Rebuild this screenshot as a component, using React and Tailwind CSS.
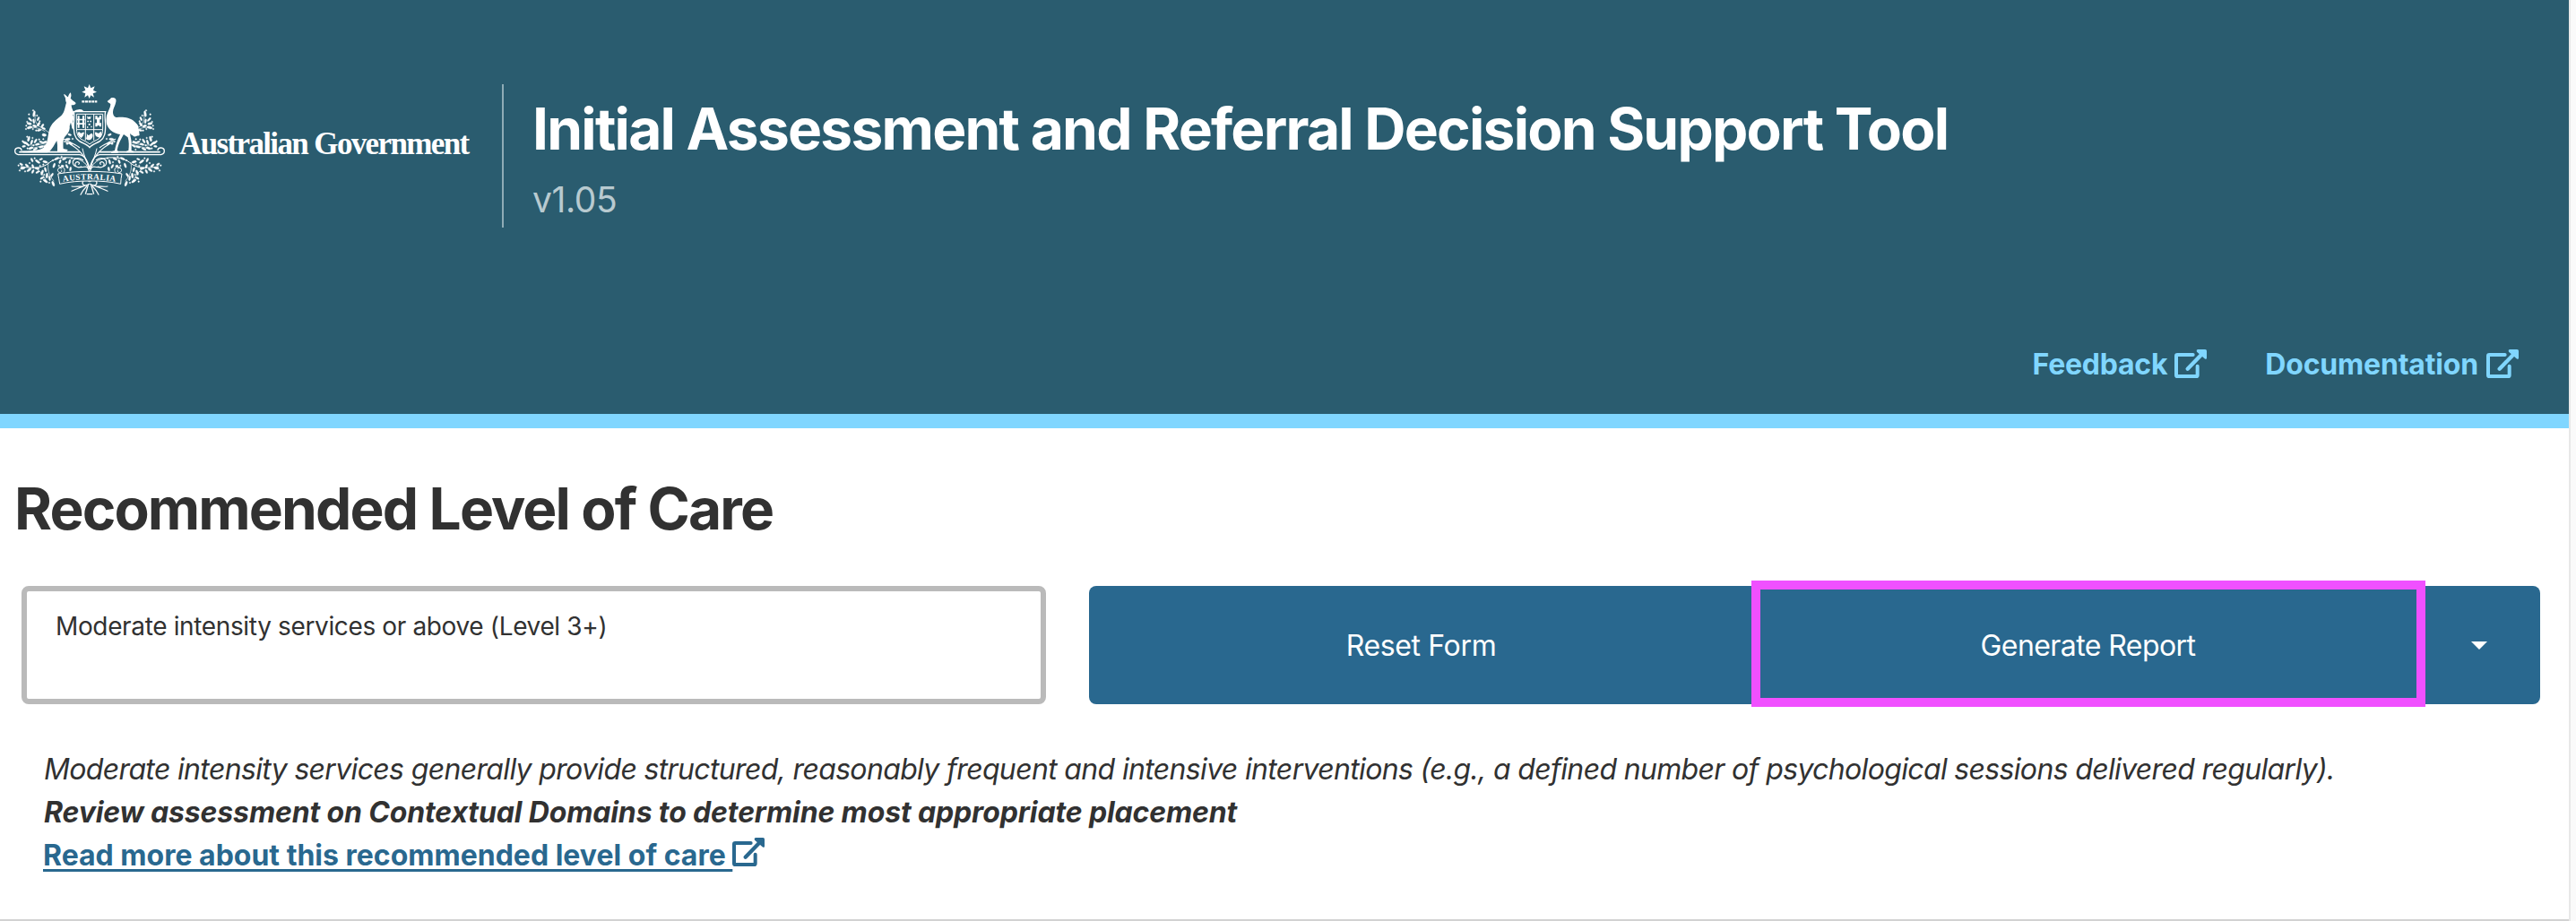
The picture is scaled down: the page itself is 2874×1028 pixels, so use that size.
const LEAVES = [
  // [x, y, rx, ry, rotation] on the left-hand branches
  [114, 141, 3.5, 10, 10], [101, 160, 3, 8, -45], [113, 166, 3, 8, -10], [128, 158, 3, 7, 25],
  [98, 174, 8, 3.5, 10], [99, 187, 9, 4, -15], [116, 182, 7, 3.5, 20], [129, 176, 3.5, 8, 30],
  [142, 181, 3, 7, 35], [146, 190, 6, 3, 20], [131, 196, 7, 3, -15],
  [96, 225, 3.5, 9, 15], [84, 238, 8, 3.5, 20], [80, 250, 6, 3, -10], [93, 244, 6, 3, 45],
  [106, 236, 3, 8, 20], [119, 232, 3, 8, 30], [125, 243, 7, 3, -15], [103, 256, 8, 3.5, -20],
  [118, 259, 8, 3, -25], [139, 236, 8, 3, 20], [150, 236, 7, 3, -20], [138, 252, 8, 3, -10], [152, 249, 7, 3, -30],
  [148, 212, 7, 4.5, 10], [233, 211, 6, 3, 20], [227, 226, 8, 3.5, -5], [236, 240, 7, 3, 40], [225, 241, 4, 3, 0],
  [107, 296, 7, 3, 65], [126, 301, 9, 3.5, 35], [151, 302, 8, 3.5, 15], [137, 293, 6, 2.5, -20],
  [71, 310, 6, 3, 30], [76, 323, 8, 4, -10], [90, 314, 7, 3, 40], [97, 329, 8, 3.5, -35],
  [110, 317, 3, 7, -20], [110, 334, 3, 7, 25], [124, 324, 8, 3, 10], [126, 336, 7, 3, -30],
  [141, 338, 3.5, 9, 20], [152, 328, 3, 8, -15], [141, 356, 7, 3, -30], [157, 348, 3.5, 9, 5],
  [152, 366, 9, 3.5, 35], [166, 357, 3, 8, -10], [178, 375, 3.5, 9, -20], [174, 346, 3, 7, 30],
  [190, 291, 8, 3, -25], [201, 301, 3, 7, 20], [215, 292, 7, 3, -20], [233, 302, 3, 8, 15],
  [224, 317, 3, 7, -30], [236, 326, 3, 7, 10], [209, 316, 5, 3, 10], [181, 314, 3, 8, 20],
];
const BERRIES = [
  [111, 130], [97, 143], [124, 147], [91, 168], [133, 166], [88, 181], [110, 192], [121, 197], [87, 192],
  [76, 233], [91, 218], [109, 222], [112, 247], [92, 257], [131, 227], [145, 226], [146, 261],
  [62, 314], [66, 331], [84, 334], [99, 306], [116, 290], [145, 311], [134, 315], [148, 345], [165, 372], [136, 368],
  [177, 297], [206, 285], [222, 303], [197, 315], [240, 290], [217, 234], [243, 225],
];

function Half() {
  return (
    <g>
      <g fill="none" stroke="#fff" strokeLinecap="round">
        <path d="M72 262c-2-10-22-10-22 4 0 9 9 12 20 12h196c18 2 28 22 34 48" strokeWidth="4" />
        <path d="M66 269h200" strokeWidth="5" />
        <path d="M118 145c-4 18 4 38 28 46 8 6 16 12 22 16M98 186c18 0 34 2 52 14" strokeWidth="2" />
        <path d="M82 240c20 12 50 4 76-2M96 258c22-2 40-10 64-14" strokeWidth="2" />
        <path d="M296 318c-8-38-42-66-76-84M214 226c20 10 36 16 52 28" strokeWidth="3.5" />
        <path d="M70 318c30 4 70 10 96-14 20-18 64-20 92-12 20 6 34 18 38 34" strokeWidth="3" />
        <path d="M162 304c-4 22 0 40 18 62M118 322c14 8 24 20 36 42" strokeWidth="2" />
        <path d="M272 318c-14 8-26-6-18-14 7-6 16 3 9 6M278 296c-18-12-36-4-34 10 2 16 26 16 42 12 8 0 12 10 12 18" strokeWidth="3.5" />
        <path d="M276 258c4 20 14 42 22 64" strokeWidth="3" />
        <path d="M207 325c-8-8-18 2-12 10 6 6 16 0 10-5M198 321c8-4 20-1 18 10-1 10-12 16-20 11" strokeWidth="3" />
        <path d="M298 368c-4-10-22-6-22 4 0 9 12 12 22 4M290 380c-16 4-30 12-50 20M290 384c-10 10-16 18-20 28M276 384c-14 0-28 2-36 0" strokeWidth="3.5" />
      </g>
      <g fill="#fff" stroke="#fff" strokeWidth="1.2">
        {LEAVES.map(([x, y, rx, ry, a], i) => (
          <ellipse key={i} cx={x} cy={y} rx={rx} ry={ry} transform={`rotate(${a} ${x} ${y})`} />
        ))}
        {BERRIES.map(([x, y], i) => (
          <circle key={i} cx={x} cy={y} r="2.4" />
        ))}
      </g>
    </g>
  );
}

function CoatOfArms() {
  return (
    <svg viewBox="0 0 600 450" className="h-[150px] w-[200px] shrink-0" role="img" aria-label="Coat of arms">
      <Half />
      <g transform="matrix(-1 0 0 1 600 0)">
        <Half />
      </g>
      {/* star and wreath */}
      <path fill="#fff" d="M299 42l5 13 13-6-5 13 12 6-13 5 4 13-11-7-5 11-5-11-11 7 3-13-12-5 12-6-5-13 13 6z" />
      <path d="M274 100h51" stroke="#fff" strokeWidth="7" strokeDasharray="9 2" />
      {/* kangaroo */}
      <path
        fill="#fff"
        d="M214 75c5 2 9 6 12 10l2-1c1-5 4-10 8-14 3 6 3 13 0 19 3 3 5 6 12 11 4 3 7 5 5 8-4 4-10 4-14 4 0 8 4 16 8 24l22-7c6 0 9 4 11 6-8 1-14 0-18 3-6 4-14 6-18 6 4 8 2 18 0 24 4 6 6 16 4 24-3 4-8-2-8-8l-3-14-4 12c2 14-6 26-14 34-8 8-8 22-7 42l14 3c2 4-2 6-6 6h-28l0-22-2-14c-8 14-14 26-24 36-4 4-10 4-16 4H84c-8 0-14-2-16-5 30-2 62 0 78-12 14-12 14-40 18-56 6-26 26-38 42-52 10-10 12-30 16-42-4-8-2-16-4-18-2-4-5-8-4-12z"
      />
      {/* emu */}
      <path
        fill="#fff"
        d="M359 99c2-2 6-5 9-7 2-4 6-6 11-5 8 1 11 7 9 14-2 12-10 22-10 34 0 10 4 18 14 18 20-2 42 0 58 14 12 10 16 26 17 46-8 4-14 0-18 0-6 2-10-2-14-6 2 14 6 24 5 34v23l10 3c0 3-2 4-4 4h-24c0-4 2-6 8-7 2-14 2-30-2-44l-14-10c-8 14-18 30-22 54l6 4c0 4-4 4-6 4h-20c0-4 4-6 12-8 4-18 8-34 18-54-10-2-22-4-32-14-12-12-16-26-14-40 0-18 14-32 14-48-4-3-8-4-11-9z"
      />
      {/* shield */}
      <path d="M247 134h106c-4 12 0 30 0 46 0 24-2 42-18 52-12 8-28 12-35 22-7-10-23-14-35-22-16-10-18-28-18-52 0-16 4-34 0-46z" fill="#2a5c6f" stroke="#fff" strokeWidth="4" />
      <path d="M256 142h88v44c0 20-4 32-14 39-12 7-22 10-30 18-8-8-18-11-30-18-10-7-14-19-14-39z" fill="none" stroke="#fff" strokeWidth="3" />
      <path d="M286 142v88M314 142v88M256 194h88" stroke="#fff" strokeWidth="3" fill="none" />
      <g fill="#fff">
        <path d="M260 148h6v40h-6zM276 148h6v40h-6zM258 158h26v5h-26zM258 172h26v5h-26z" />
        <path d="M291 148l4 4 3-2 3 2 4-4-2 10h-10zM292 164h5v5h-5zM301 164h5v5h-5zM296 174h6v5h-6zM291 184h4v4h-4zM304 182h4v5h-4z" />
        <path d="M319 148h7v6h6v-6h7v12h-5v12h5v12h-7v-4h-6v4h-7v-12h5v-12h-5z" />
        <path d="M260 204c8-6 8 4 12 2s8-6 10-2c-2 8-4 14-10 18-6-2-12-8-12-18z" />
        <path d="M290 206c4 6 6 8 8 6l8-6c6 2 6 10 2 16-4 8-14 10-20 2 2-6 4-10 2-18z" />
        <path d="M318 204c4-4 8 4 12 2l8-6c4 8 2 18-4 22l-8-4c-6 0-8-6-8-14z" />
      </g>
      <path d="M250 134c6-5 20-7 27-1" stroke="#fff" strokeWidth="6" fill="none" />
      {/* scroll */}
      <path d="M194 342c34-6 70-8 106-8s74 2 108 8c-2 10-4 22-4 34-32-8-68-10-102-10s-70 2-102 10c-2-12-4-24-6-34z" fill="#2a5c6f" stroke="#fff" strokeWidth="3" />
      <path id="scroll-line" d="M209 369c30-5 60-8 91-8s61 3 91 8" fill="none" />
      <text fill="#fff" fontFamily="Liberation Serif, serif" fontWeight="700" fontSize="28">
        <textPath href="#scroll-line" textLength="176" startOffset="2">AUSTRALIA</textPath>
      </text>
      <path d="M296 376l-10 34M304 376l10 34M290 410h20" stroke="#fff" strokeWidth="4" fill="none" />
    </svg>
  );
}

function ExternalIcon({ className = '' }) {
  return (
    <svg viewBox="0 0 108 96" className={'h-8 w-9 shrink-0 ' + className} fill="none" stroke="currentColor" aria-hidden="true">
      <path d="M62 18H10q-4 0-4 4v64q0 4 4 4h63q4 0 4-4V56" strokeWidth="12" strokeLinecap="round" />
      <path d="M44 65l48-49" strokeWidth="13" strokeLinecap="round" />
      <path d="M79 0h24q5 0 5 5v24q-2 6-7 2L75 8q-3-7 4-8z" fill="currentColor" stroke="none" />
    </svg>
  );
}

function HeaderLink({ children, className }) {
  return (
    <a href="#" className={'flex items-center text-[32px] leading-[48px] font-bold text-[#80d6ff] ' + className}>
      <span className="pt-0.5">{children}</span>
      <ExternalIcon />
    </a>
  );
}

export default function App() {
  return (
    <div className="flex h-[1028px] w-[2874px] overflow-hidden bg-[#fafafa] font-['Inter',sans-serif] text-[#313131]">
      <div className="flex w-[2866px] shrink-0 flex-col border-b-2 border-[#d2d2d2] bg-white">
        <header className="flex h-[478px] flex-col justify-between border-b-[16px] border-[#80d6ff] bg-[#2a5c6f]">
          <div className="flex pt-20">
            <CoatOfArms />
            <div className="w-[360px] pt-[61px] font-['Liberation_Serif',serif] text-[35px] leading-[40px] font-bold tracking-[-1.63px] whitespace-nowrap text-white">
              Australian Government
            </div>
            <div className="mt-[14px] h-40 border-l-2 border-[#8facb6] pt-[12px] pl-[32px]">
              <h1 className="text-[64px] leading-[76px] font-bold tracking-[-1.76px] whitespace-nowrap text-white">
                Initial Assessment and Referral Decision Support Tool
              </h1>
              <p className="mt-[13px] text-[39px] leading-[56px] tracking-[-0.4px] text-[#b8cad0]">v1.05</p>
            </div>
          </div>
          <nav className="flex justify-end gap-[65px] pr-14 pb-[31px]">
            <HeaderLink className="gap-2 tracking-[-0.24px]">Feedback</HeaderLink>
            <HeaderLink className="gap-[9px] tracking-[-0.178px]">Documentation</HeaderLink>
          </nav>
        </header>

        <main>
          <h2 className="pt-[52px] pl-4 text-[64px] leading-[76px] font-bold tracking-[-1.871px]">Recommended Level of Care</h2>
          <div className="mt-[48px] flex gap-12 pl-6">
            <div className="h-[132px] w-[1143px] rounded-lg border-[6px] border-[#bababa] pt-[18px] pl-[32px] text-[28px] leading-[42px] tracking-[-0.36px]">
              Moderate intensity services or above (Level 3+)
            </div>
            <div className="flex h-[132px] w-[1619px] rounded-lg bg-[#29688f] text-[32px] text-white">
              <button className="w-[743px] pt-0.5 pr-0.5 tracking-[-0.351px]">Reset Form</button>
              <button className="relative w-[744px] pt-0.5 pr-px tracking-[-0.574px]">
                Generate Report
                <span className="absolute -top-[6px] -left-[4px] h-[141px] w-[752px] border-[10px] border-[#f050ff]" />
              </button>
              <button className="flex w-[128px] items-center justify-center" aria-label="More options">
                <svg viewBox="0 0 18 9" className="h-[9px] w-[18px]" fill="currentColor">
                  <path d="M0 0h18L9 9z" />
                </svg>
              </button>
            </div>
          </div>
          <div className="mt-[49px] pl-12 text-[32px] leading-[48px] whitespace-nowrap">
            <p className="pl-px tracking-[-0.658px] italic">
              Moderate intensity services generally provide structured, reasonably frequent and intensive interventions (e.g., a
              defined number of psychological sessions delivered regularly).
            </p>
            <p className="pl-px font-bold tracking-[-0.14px] italic">
              Review assessment on Contextual Domains to determine most appropriate placement
            </p>
            <a href="#" className="flex items-center font-bold text-[#29688f]">
              <span className="whitespace-pre underline decoration-[3px] underline-offset-[4px]">
                {'Read more about this recommended level of care '}
              </span>
              <ExternalIcon className="-mt-[8px]" />
            </a>
          </div>
        </main>
      </div>
      <div className="w-[2px] bg-[#e8e8e8]" />
    </div>
  );
}
